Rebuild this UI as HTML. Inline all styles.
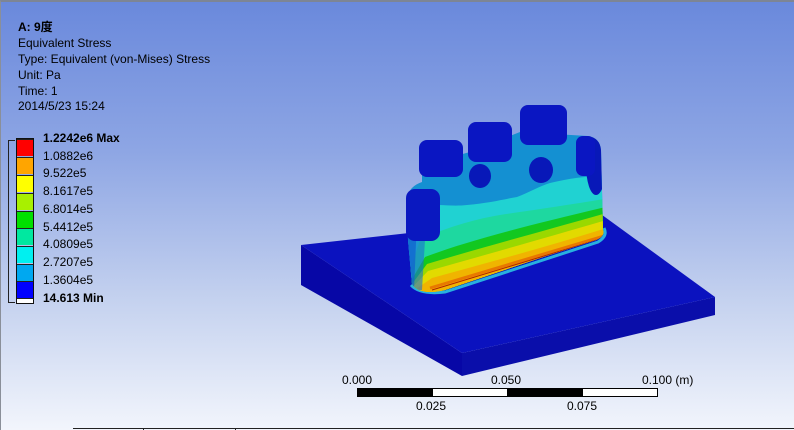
<!DOCTYPE html>
<html><head><meta charset="utf-8"><style>
*{margin:0;padding:0}
body{width:794px;height:430px;overflow:hidden;position:relative;font-family:"Liberation Sans","Noto Sans CJK SC",sans-serif;}
#bg{position:absolute;left:0;top:0;width:794px;height:430px;background:linear-gradient(#6a89dc 0%,#8ea6e4 35%,#c5d2ef 70%,#f2f5fc 100%);border-top:2px solid #7d8595;border-left:1px solid #8a8f99;box-sizing:border-box}
.t{position:absolute;left:18px;font-size:12px;color:#000;line-height:14px;white-space:nowrap}
.l{position:absolute;left:43px;font-size:12px;color:#000;line-height:14px}
.b{font-weight:bold}
.sw{position:absolute;left:17px;width:16px;height:17px;box-sizing:border-box;border-top:1px solid #222}
</style></head><body>
<div id="bg"></div>
<div class="t b" style="top:20px">A: 9度</div>
<div class="t" style="top:36px">Equivalent Stress</div>
<div class="t" style="top:52px">Type: Equivalent (von-Mises) Stress</div>
<div class="t" style="top:68px">Unit: Pa</div>
<div class="t" style="top:84px">Time: 1</div>
<div class="t" style="top:99px">2014/5/23 15:24</div>

<div style="position:absolute;left:8px;top:140px;width:6px;height:161px;border:1px solid #222;border-right:none"></div>
<div style="position:absolute;left:16px;top:138px;width:18px;height:166px;border:1px solid #111;box-sizing:border-box"></div>
<div class="sw" style="top:139px;background:#ff0000"></div>
<div class="sw" style="top:157px;background:#ffa500"></div>
<div class="sw" style="top:175px;background:#ffff00"></div>
<div class="sw" style="top:193px;background:#a8f000"></div>
<div class="sw" style="top:211px;background:#00e000"></div>
<div class="sw" style="top:228px;background:#00e8a0"></div>
<div class="sw" style="top:246px;background:#00f0f0"></div>
<div class="sw" style="top:264px;background:#00a8f0"></div>
<div class="sw" style="top:281px;background:#0000ff;height:17px"></div>
<div class="sw" style="top:298px;background:#fff;height:5px"></div>

<div class="l b" style="top:131px">1.2242e6 Max</div>
<div class="l" style="top:149px">1.0882e6</div>
<div class="l" style="top:166px">9.522e5</div>
<div class="l" style="top:184px">8.1617e5</div>
<div class="l" style="top:202px">6.8014e5</div>
<div class="l" style="top:220px">5.4412e5</div>
<div class="l" style="top:237px">4.0809e5</div>
<div class="l" style="top:255px">2.7207e5</div>
<div class="l" style="top:273px">1.3604e5</div>
<div class="l b" style="top:291px">14.613 Min</div>

<svg style="position:absolute;left:0;top:0" width="794" height="430">
<defs>
<clipPath id="bc"><path d="M407,197 Q410,186 422,182 L422,165 L470,152 L520,132 L588,136 Q600,138 601,150 L603,230 Q605,236 596,240 L540,258 L445,290 Q420,296 412,284 L408,240 Z"/></clipPath>
</defs>
<polygon points="301,245 462,353 462,376 301,285" fill="#0707a6"/>
<polygon points="462,353 715,297 715,315 462,376" fill="#0a0eaa"/>
<polygon points="301,245 598,212 715,297 462,353" fill="#0b12bf"/>
<path d="M411,285 Q420,295 445,292 L540,261 L598,242 Q608,236 604,228" stroke="#28b0e0" stroke-width="3" fill="none"/>
<g clip-path="url(#bc)">
<rect x="400" y="120" width="210" height="180" fill="#1490d2"/>
<path d="M400,205 C430,203 450,207 467,205 C490,203 505,199 517,197 C530,192 540,186 550,183 C570,178 590,176 610,175 L610,300 L400,300Z" fill="#20d2d2"/>
<path d="M420,240 C440,230 470,220 500,215 C540,209 575,204 610,198 L610,300 L400,300Z" fill="#1ed8a0"/>
<path d="M425,257 C470,240 530,225 610,206 L610,300 L400,300Z" fill="#12c820"/>
<path d="M427,264 C480,248 540,232 610,212 L610,300 L400,300Z" fill="#9ad800"/>
<path d="M428,271 C485,255 545,238 610,219 L610,300 L400,300Z" fill="#e2da00"/>
<path d="M432,278 C490,262 550,246 610,227 L610,300 L400,300Z" fill="#f0b400"/>
<path d="M430,288 L604,236" stroke="#e87800" stroke-width="3"/>
<path d="M432,290 L600,239" stroke="#b02000" stroke-width="1"/>
<path d="M400,195 L432,195 L425,240 L422,290 L400,290Z" fill="#1a70d0" opacity="0.6"/>
<path d="M400,195 L418,195 L414,290 L400,290Z" fill="#1060d0" opacity="0.7"/>
<ellipse cx="541" cy="170" rx="12" ry="13" fill="#0818b8"/>
<ellipse cx="480" cy="176" rx="11" ry="12" fill="#0818b8"/>
<ellipse cx="596" cy="165" rx="10" ry="30" fill="#0818b8"/>
</g>
<rect x="406" y="189" width="34" height="52" rx="9" fill="#0a18c0"/>
<rect x="419" y="140" width="44" height="37" rx="8" fill="#0a16c2"/>
<rect x="468" y="122" width="44" height="40" rx="8" fill="#0a16c2"/>
<rect x="520" y="105" width="47" height="40" rx="8" fill="#0a16c2"/>
<rect x="576" y="136" width="19" height="40" rx="7" fill="#0a16c2"/>
<rect x="357.5" y="388.5" width="300" height="8" fill="#fff" stroke="#000"/>
<rect x="357" y="388" width="76" height="9" fill="#000"/>
<rect x="507" y="388" width="76" height="9" fill="#000"/>
<g font-family="Liberation Sans" font-size="12" fill="#000">
<text x="342" y="384">0.000</text>
<text x="491" y="384">0.050</text>
<text x="642" y="384">0.100 (m)</text>
<text x="416" y="410">0.025</text>
<text x="567" y="410">0.075</text>
</g>
<line x1="73" y1="428.5" x2="794" y2="428.5" stroke="#222"/>
<line x1="143.5" y1="428" x2="143.5" y2="430" stroke="#222"/>
<line x1="235.5" y1="428" x2="235.5" y2="430" stroke="#222"/>
</svg>
</body></html>
